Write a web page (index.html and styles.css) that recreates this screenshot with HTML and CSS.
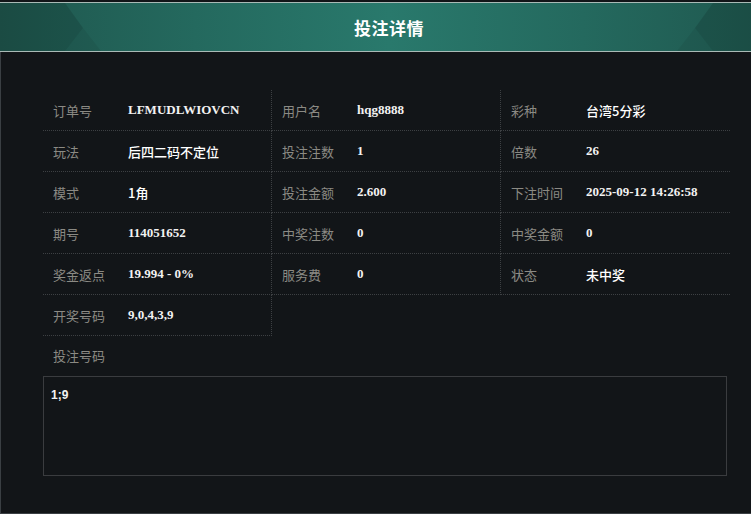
FILE: index.html
```html
<!DOCTYPE html>
<html lang="zh-CN">
<head>
  <meta charset="UTF-8">
  <meta name="viewport" content="width=device-width, initial-scale=1.0">
  <title>投注详情</title>
  <link rel="stylesheet" href="styles.css">
</head>
<body>
  <div class="dialog">
    <div class="dialog-header">
      <svg class="deco deco-left" width="110" height="48" viewBox="0 0 110 48">
        <polygon points="0,0 65,0 83,25 65,48 0,48" fill="rgba(0,0,0,0.13)"/>
        <polygon points="83,25 101,48 65,48" fill="rgba(0,0,0,0.06)"/>
      </svg>
      <h1>投注详情</h1>
      <svg class="deco deco-right" width="110" height="48" viewBox="0 0 110 48">
        <polygon points="110,0 45,0 27,25 45,48 110,48" fill="rgba(0,0,0,0.13)"/>
        <polygon points="27,25 9,48 45,48" fill="rgba(0,0,0,0.06)"/>
      </svg>
    </div>

    <div class="dialog-body">
      <div class="info-grid">
        <div class="cell"><span class="label">订单号</span><span class="value">LFMUDLWIOVCN</span></div>
        <div class="cell"><span class="label">用户名</span><span class="value">hqg8888</span></div>
        <div class="cell"><span class="label">彩种</span><span class="value cn">台湾5分彩</span></div>

        <div class="cell"><span class="label">玩法</span><span class="value cn">后四二码不定位</span></div>
        <div class="cell"><span class="label">投注注数</span><span class="value">1</span></div>
        <div class="cell"><span class="label">倍数</span><span class="value">26</span></div>

        <div class="cell"><span class="label">模式</span><span class="value cn">1角</span></div>
        <div class="cell"><span class="label">投注金额</span><span class="value">2.600</span></div>
        <div class="cell"><span class="label">下注时间</span><span class="value">2025-09-12 14:26:58</span></div>

        <div class="cell"><span class="label">期号</span><span class="value">114051652</span></div>
        <div class="cell"><span class="label">中奖注数</span><span class="value">0</span></div>
        <div class="cell"><span class="label">中奖金额</span><span class="value">0</span></div>

        <div class="cell"><span class="label">奖金返点</span><span class="value">19.994 - 0%</span></div>
        <div class="cell"><span class="label">服务费</span><span class="value">0</span></div>
        <div class="cell"><span class="label">状态</span><span class="value cn">未中奖</span></div>

        <div class="cell"><span class="label">开奖号码</span><span class="value">9,0,4,3,9</span></div>
      </div>

      <div class="bet-title">投注号码</div>
      <div class="bet-box">1;9</div>
    </div>
  </div>
</body>
</html>
```

FILE: styles.css
```css
html, body {
  margin: 0;
  padding: 0;
  overflow: hidden;
}
body {
  background-color: #121518;
  font-family: "Noto Sans CJK SC", "Noto Sans", sans-serif;
  color: #fff;
}
.dialog {
  width: 778px;
  padding-top: 2px;
  background-color: #121518;
}
.dialog-header {
  position: relative;
  height: 48px;
  border-top: 1px solid #a9bab6;
  border-bottom: 1px solid #a9bab6;
  background: linear-gradient(90deg, #1f574e 0%, #24695e 25%, #29796c 50%, #24695e 75%, #1f574e 100%);
  display: flex;
  align-items: center;
  justify-content: center;
}
.dialog-header h1 {
  margin: 0;
  font-size: 17px;
  font-weight: bold;
  color: #fff;
  letter-spacing: 0.5px;
}
.deco {
  position: absolute;
  top: 0;
}
.deco-left {
  left: 0;
}
.deco-right {
  right: 0;
}
.dialog-body {
  border-left: 1px solid #3a3f43;
  border-bottom: 1px solid #3a3f43;
  padding: 38px 0 37px 42px;
}
.info-grid {
  width: 687px;
  display: grid;
  grid-template-columns: 229px 229px 229px;
}
.cell {
  height: 40px;
  border-bottom: 1px dotted #3d4043;
  border-right: 1px dotted #3d4043;
  display: flex;
  align-items: center;
  box-sizing: content-box;
}
.cell:nth-child(3n) {
  border-right: none;
}
.cell:not(:nth-child(3n)) {
  width: 228px;
}
.label {
  width: 75px;
  padding-left: 10px;
  font-size: 13px;
  color: #8b8a84;
}
.value {
  font-family: "Liberation Serif", "Noto Sans CJK SC", serif;
  font-size: 13px;
  font-weight: bold;
  color: #f2f2f2;
}
.value.cn {
  font-family: "Noto Sans CJK SC", sans-serif;
  font-weight: 500;
  color: #fff;
}
.bet-title {
  height: 40px;
  line-height: 40px;
  padding-left: 10px;
  font-size: 13px;
  color: #8b8a84;
}
.bet-box {
  width: 668px;
  height: 80px;
  border: 1px solid #3a3c3f;
  padding: 11px 7px 7px 7px;
  font-family: "Liberation Sans", sans-serif;
  font-size: 12px;
  font-weight: bold;
  color: #f2f2f2;
}
```
